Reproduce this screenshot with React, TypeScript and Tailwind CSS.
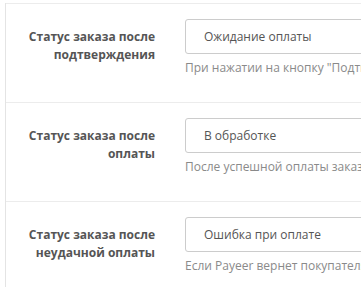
const rows = [
  {
    label: ['Статус заказа после', 'подтверждения'],
    value: 'Ожидание оплаты',
    help: 'При нажатии на кнопку "Подтвердить заказ" заказу будет присвоен этот статус',
  },
  {
    label: ['Статус заказа после', 'оплаты'],
    value: 'В обработке',
    help: 'После успешной оплаты заказу будет присвоен этот статус',
  },
  {
    label: ['Статус заказа после', 'неудачной оплаты'],
    value: 'Ошибка при оплате',
    help: 'Если Payeer вернет покупателя с ошибкой, заказу будет присвоен этот статус',
  },
];

export default function App() {
  return (
    <div
      className="h-[287px] w-[361px] overflow-hidden bg-white pl-[5px] pt-[3px] text-[12px]"
      style={{ fontFamily: '"Open Sans", "Liberation Sans", sans-serif' }}
    >
      <div className="h-full border-l border-[#e4e4e4]">
        {rows.map((r) => (
          <div key={r.value} className="flex border-t border-[#ececec] py-[15px]">
            <label className="w-[164px] shrink-0 pr-[15px] pt-[9px] text-right text-[12px] leading-[18px] font-bold text-[#555]">
              {r.label[0]}
              <br />
              {r.label[1]}
            </label>
            <div className="min-w-0 flex-1 pl-[15px]">
              <div className="flex h-[35px] w-[400px] items-center rounded-[3px] border border-[#ccc] px-[18px] text-[#555] whitespace-nowrap">
                {r.value}
              </div>
              <div className="mt-[5px] mb-[10px] whitespace-nowrap leading-[18px] text-[#8a8a8a]">
                {r.help}
              </div>
            </div>
          </div>
        ))}
      </div>
    </div>
  );
}
